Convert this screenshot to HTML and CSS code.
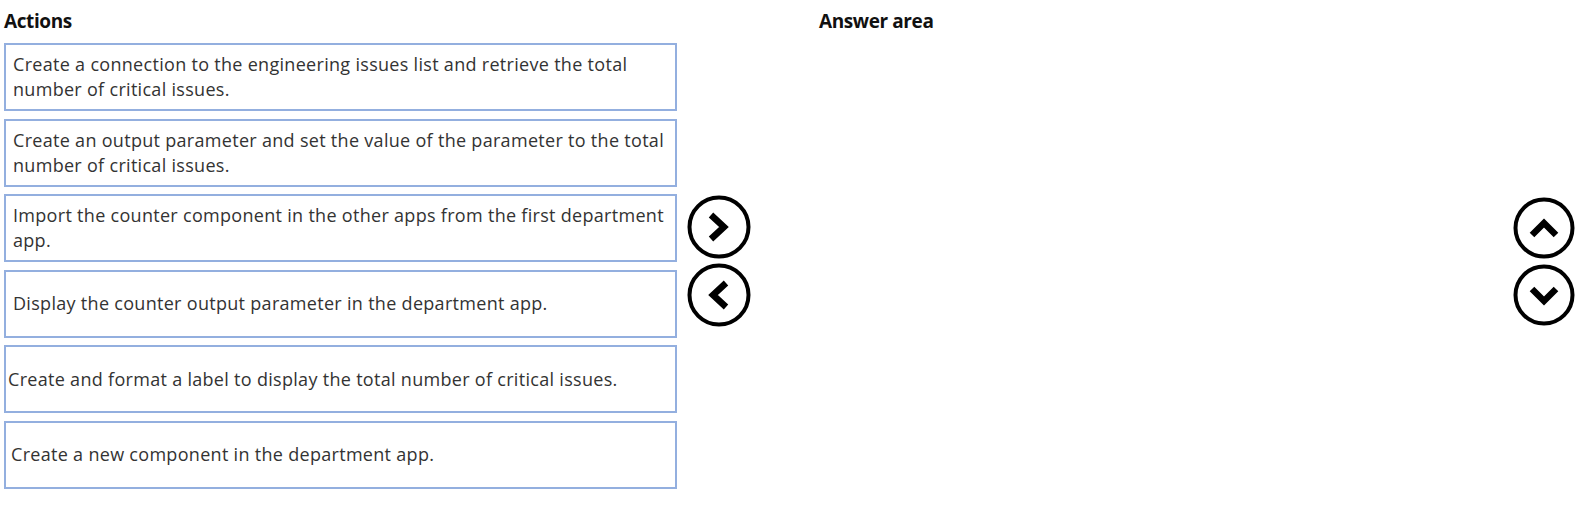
FILE: index.html
```html
<!DOCTYPE html>
<html lang="en">
<head>
<meta charset="utf-8">
<title>Actions</title>
<link rel="stylesheet" href="styles.css">
</head>
<body>
<div class="page">
  <section class="actions">
    <h2 class="heading">Actions</h2>
    <ul class="list">
      <li class="item">Create a connection to the engineering issues list and retrieve the total number of critical issues.</li>
      <li class="item">Create an output parameter and set the value of the parameter to the total number of critical issues.</li>
      <li class="item">Import the counter component in the other apps from the first department app.</li>
      <li class="item">Display the counter output parameter in the department app.</li>
      <li class="item item-tight">Create and format a label to display the total number of critical issues.</li>
      <li class="item item-mid">Create a new component in the department app.</li>
    </ul>
  </section>
  <div class="mover">
    <button class="circle" aria-label="Move right">
      <svg viewBox="0 0 64 64" width="64" height="64"><circle cx="32" cy="32" r="29.5" fill="none" stroke="#000" stroke-width="4"/><polyline points="24,20 37,32 24,44" fill="none" stroke="#000" stroke-width="6.5" stroke-linejoin="miter"/></svg>
    </button>
    <button class="circle" aria-label="Move left">
      <svg viewBox="0 0 64 64" width="64" height="64"><circle cx="32" cy="32" r="29.5" fill="none" stroke="#000" stroke-width="4"/><polyline points="39,20 26,32 39,44" fill="none" stroke="#000" stroke-width="6.5" stroke-linejoin="miter"/></svg>
    </button>
  </div>
  <section class="answer">
    <h2 class="heading">Answer area</h2>
  </section>
  <div class="sorter">
    <button class="circle" aria-label="Move up">
      <svg viewBox="0 0 62 62" width="62" height="62"><circle cx="31" cy="31" r="28.5" fill="none" stroke="#000" stroke-width="4"/><polyline points="19,38 31,26 43,38" fill="none" stroke="#000" stroke-width="6.5" stroke-linejoin="miter"/></svg>
    </button>
    <button class="circle" aria-label="Move down">
      <svg viewBox="0 0 62 62" width="62" height="62"><circle cx="31" cy="31" r="28.5" fill="none" stroke="#000" stroke-width="4"/><polyline points="19,25 31,37 43,25" fill="none" stroke="#000" stroke-width="6.5" stroke-linejoin="miter"/></svg>
    </button>
  </div>
</div>
</body>
</html>
```

FILE: styles.css
```css
html, body {
  margin: 0;
  padding: 0;
  background: #fff;
}
body {
  font-family: "Open Sans", "Noto Sans", "Liberation Sans", sans-serif;
  color: #333;
}
.page {
  display: flex;
  align-items: flex-start;
  width: 1590px;
  height: 508px;
}
.actions {
  width: 673px;
  margin-left: 4px;
}
.heading {
  margin: 0;
  height: 43px;
  padding-top: 8px;
  box-sizing: border-box;
  font-size: 19px;
  line-height: 26px;
  font-weight: 700;
  color: #111;
  letter-spacing: -0.4px;
}
.list {
  list-style: none;
  margin: 0;
  padding: 0;
  display: flex;
  flex-direction: column;
  gap: 7.6px;
}
.item {
  box-sizing: border-box;
  height: 68px;
  border: 2px solid #93afdf;
  padding: 0 5px 0 7px;
  display: flex;
  align-items: center;
  font-size: 18px;
  line-height: 25px;
  letter-spacing: 0.3px;
}
.item-tight {
  padding-left: 2px;
}
.item-mid {
  padding-left: 5px;
}
.mover {
  display: flex;
  flex-direction: column;
  gap: 4px;
  margin-left: 10px;
  padding-top: 195px;
}
.circle {
  display: block;
  margin: 0;
  padding: 0;
  border: 0;
  background: none;
  line-height: 0;
}
.answer {
  flex: 1;
  margin-left: 68px;
}
.sorter {
  display: flex;
  flex-direction: column;
  gap: 5px;
  margin-right: 15px;
  padding-top: 197px;
}
```
